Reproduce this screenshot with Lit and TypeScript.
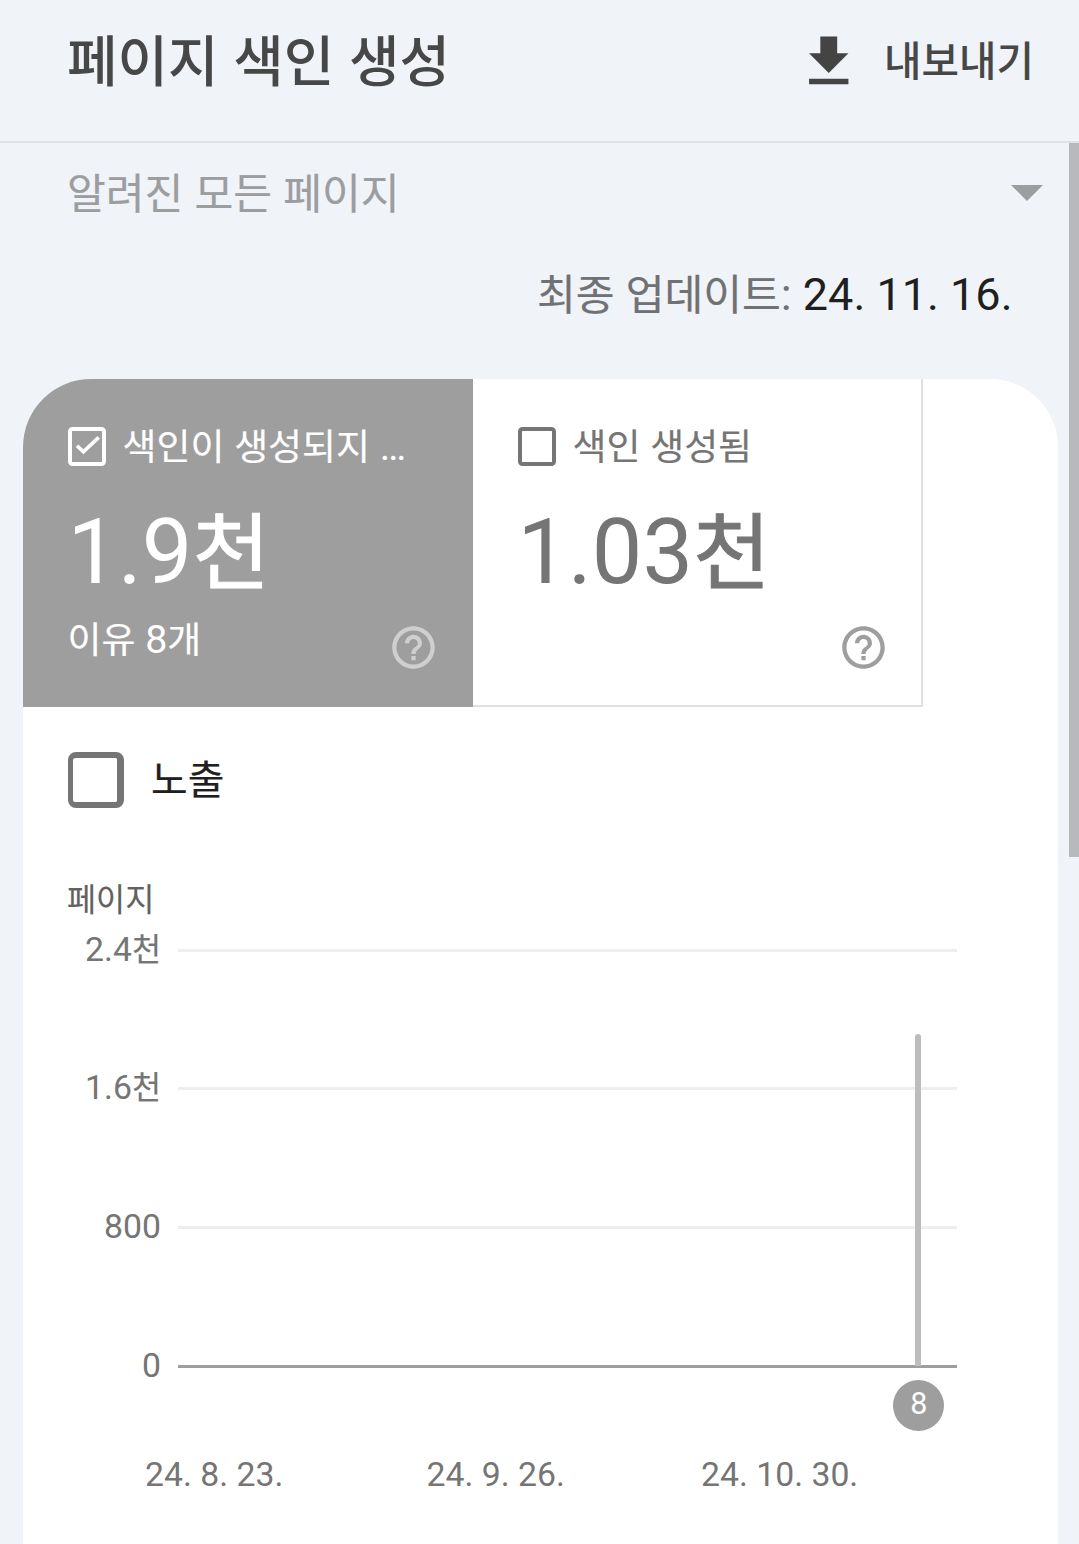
import { LitElement, html, css, svg } from "lit";
import { customElement, property } from "lit/decorators.js";

/** Hangul runs are set slightly smaller than the Latin digits beside them. */
const runs = (text: string) =>
  text
    .split(/([\uAC00-\uD7A3]+)/)
    .filter((part) => part !== "")
    .map((part) => (/[\uAC00-\uD7A3]/.test(part) ? html`<span class="ko">${part}</span>` : part));

const shared = css`
  * {
    box-sizing: border-box;
  }
  .ko {
    font-family: "Noto Sans CJK KR", sans-serif;
    font-size: 0.937em;
    line-height: 0;
    -webkit-text-stroke: 0.005em currentColor;
  }
  svg {
    display: block;
    flex: none;
  }
`;

@customElement("metric-tile")
export class MetricTile extends LitElement {
  @property() label = "";
  @property() value = "";
  @property() note = "";
  @property({ type: Boolean, reflect: true }) selected = false;

  static styles = [
    shared,
    css`
      :host {
        display: block;
        box-sizing: border-box;
        width: 450px;
        height: 328px;
        padding: 48px 32px 0 45px;
        color: #757575;
        border-right: 2px solid #e0e0e0;
        border-bottom: 2px solid #e0e0e0;
      }
      :host([selected]) {
        padding-right: 34px;
        color: #fff;
        background: #9e9e9e;
        border: 0;
      }
      .head {
        display: flex;
        align-items: center;
        gap: 15.5px;
        height: 39px;
        font-size: 39.4px;
        line-height: 39px;
        white-space: nowrap;
      }
      .value {
        margin: 36px 0 0 -0.5px;
        font-size: 90px;
        line-height: 101px;
        white-space: nowrap;
      }
      .value .ko {
        -webkit-text-stroke-width: 0.012em;
      }
      .foot {
        display: flex;
        justify-content: space-between;
        align-items: flex-start;
      }
      .note {
        padding-top: 16.5px;
        margin-left: -0.5px;
        font-size: 39.4px;
        line-height: 40px;
      }
      .help {
        margin-top: 19px;
        fill: #9e9e9e;
      }
      :host([selected]) .help {
        fill: #cfcfcf;
      }
    `,
  ];

  render() {
    return html`
      <div class="head">
        <svg width="39" height="39" viewBox="0 0 39 39" fill="none" stroke="currentColor">
          <rect x="2" y="2" width="34" height="35" rx="2.5" stroke-width="4"></rect>
          ${this.selected ? svg`<path d="M9 18.7 15.4 24.7 30.7 10.4" stroke-width="3.6"></path>` : ""}
        </svg>
        <span>${runs(this.label)}</span>
      </div>
      <div class="value">${runs(this.value)}</div>
      <div class="foot">
        <span class="note">${runs(this.note)}</span>
        <svg class="help" width="51" height="51" viewBox="0 0 24 24">
          <path
            d="M11 18h2v-2h-2v2zm1-16C6.48 2 2 6.48 2 12s4.48 10 10 10 10-4.48 10-10S17.52 2 12 2zm0 18c-4.41 0-8-3.59-8-8s3.59-8 8-8 8 3.59 8 8-3.59 8-8 8zm0-14c-2.21 0-4 1.79-4 4h2c0-1.1.9-2 2-2s2 .9 2 2c0 2-3 1.75-3 5h2c0-2.25 3-2.5 3-5 0-2.21-1.79-4-4-4z"
          ></path>
        </svg>
      </div>
    `;
  }
}

@customElement("page-chart")
export class PageChart extends LitElement {
  private ticks = ["2.4천", "1.6천", "800", "0"];
  private dates = ["24. 8. 23.", "24. 9. 26.", "24. 10. 30."];

  static styles = [
    shared,
    css`
      :host {
        display: block;
        color: #757575;
        font-size: 33.75px;
      }
      .title {
        padding-left: 44px;
        color: #616161;
        line-height: 30px;
      }
      .plot {
        position: relative;
        display: grid;
        grid-template-rows: 138px 139px 139px 41px;
        margin-top: 15.5px;
      }
      .tick {
        display: flex;
        align-items: center;
        gap: 17px;
        height: 41px;
      }
      .tick-label {
        width: 138px;
        padding-bottom: 2px;
        text-align: right;
        line-height: 39px;
      }
      .line {
        width: 779px;
        height: 3px;
        background: #eee;
      }
      .tick:nth-child(4) .line {
        background: #9e9e9e;
      }
      .bar {
        position: absolute;
        left: 891.7px;
        top: 104px;
        width: 6px;
        height: 332px;
        border-radius: 3px 3px 0 0;
        background: #bdbdbd;
      }
      .badge {
        position: absolute;
        left: 870.4px;
        top: 450px;
        width: 51px;
        height: 51px;
        border-radius: 50%;
        background: #9e9e9e;
        color: #fff;
        font-size: 30.5px;
        line-height: 47px;
        text-align: center;
      }
      .dates {
        display: grid;
        grid-template-columns: 281.5px 274.5px auto;
        padding-left: 122px;
        margin-top: 68px;
        line-height: 40px;
        white-space: nowrap;
      }
    `,
  ];

  render() {
    return html`
      <div class="title">${runs("페이지")}</div>
      <div class="plot">
        ${this.ticks.map(
          (t) => html`<div class="tick"><div class="tick-label">${runs(t)}</div><div class="line"></div></div>`
        )}
        <div class="bar"></div>
        <div class="badge">8</div>
      </div>
      <div class="dates">${this.dates.map((d) => html`<span>${d}</span>`)}</div>
    `;
  }
}

@customElement("app-root")
export class AppRoot extends LitElement {
  static styles = [
    shared,
    css`
      :host {
        display: flex;
        flex-direction: column;
        width: 1079px;
        height: 1544px;
        overflow: hidden;
        background: #f0f4f9;
        font-family: Roboto, "Noto Sans CJK KR", sans-serif;
      }
      .header {
        display: flex;
        flex: none;
        align-items: center;
        justify-content: space-between;
        height: 143px;
        padding: 0 45px 17px 67px;
        border-bottom: 2px solid #e0e3e3;
        color: #474747;
        white-space: nowrap;
      }
      .header .ko {
        -webkit-text-stroke: 0;
      }
      .title {
        padding-bottom: 2px;
        font-size: 58.65px;
        line-height: 70px;
        font-weight: 500;
      }
      .export {
        display: flex;
        align-items: center;
        gap: 22px;
        font-size: 43.5px;
        line-height: 49px;
        font-weight: 500;
      }
      .export span {
        padding-bottom: 1px;
      }
      .body {
        display: flex;
        flex: 1;
        min-height: 0;
      }
      .content {
        flex: 1;
        display: flex;
        flex-direction: column;
      }
      .scrollbar {
        width: 10px;
        height: 714px;
        background: #b8b9bd;
      }
      .filter {
        display: flex;
        flex: none;
        align-items: center;
        justify-content: space-between;
        height: 102px;
        padding: 0 26px 0 67px;
        color: #9c9d9f;
        font-size: 45px;
        line-height: 50px;
      }
      .updated {
        flex: none;
        height: 99px;
        padding-right: 56.5px;
        color: #707173;
        font-size: 45px;
        line-height: 99px;
        text-align: right;
        white-space: nowrap;
      }
      .date {
        color: #1f1f1f;
      }
      .card {
        flex: 1;
        margin: 35px 11px 0 23px;
        border-radius: 68px 68px 0 0;
        overflow: hidden;
        background: #fff;
      }
      .tiles {
        display: flex;
      }
      .impressions {
        display: flex;
        align-items: center;
        gap: 27px;
        margin: 45px 0 76.5px 45px;
        height: 56px;
        color: #1f1f1f;
        font-size: 42.5px;
        line-height: 56px;
      }
      .checkbox {
        width: 56px;
        height: 56px;
        border: solid #757575;
        border-width: 6px 7px 6px 5px;
        border-radius: 8px;
      }
    `,
  ];

  render() {
    return html`
      <div class="header">
        <div class="title">${runs("페이지 색인 생성")}</div>
        <div class="export">
          <svg width="67.5" height="67.5" viewBox="0 0 24 24" fill="#444">
            <path d="M19 9h-4V3H9v6H5l7 7 7-7zM5 18v2h14v-2H5z"></path>
          </svg>
          <span>${runs("내보내기")}</span>
        </div>
      </div>
      <div class="body">
        <div class="content">
          <div class="filter">
            <span>${runs("알려진 모든 페이지")}</span>
            <svg width="32" height="18" viewBox="0 0 32 18" fill="#9c9d9f"><path d="M0 0H32L16 16Z"></path></svg>
          </div>
          <div class="updated">${runs("최종 업데이트: ")}<span class="date">24. 11. 16.</span></div>
          <div class="card">
            <div class="tiles">
              <metric-tile selected label="색인이 생성되지 …" value="1.9천" note="이유 8개"></metric-tile>
              <metric-tile label="색인 생성됨" value="1.03천"></metric-tile>
            </div>
            <div class="impressions">
              <span class="checkbox"></span>
              <span>${runs("노출")}</span>
            </div>
            <page-chart></page-chart>
          </div>
        </div>
        <div class="scrollbar"></div>
      </div>
    `;
  }
}
